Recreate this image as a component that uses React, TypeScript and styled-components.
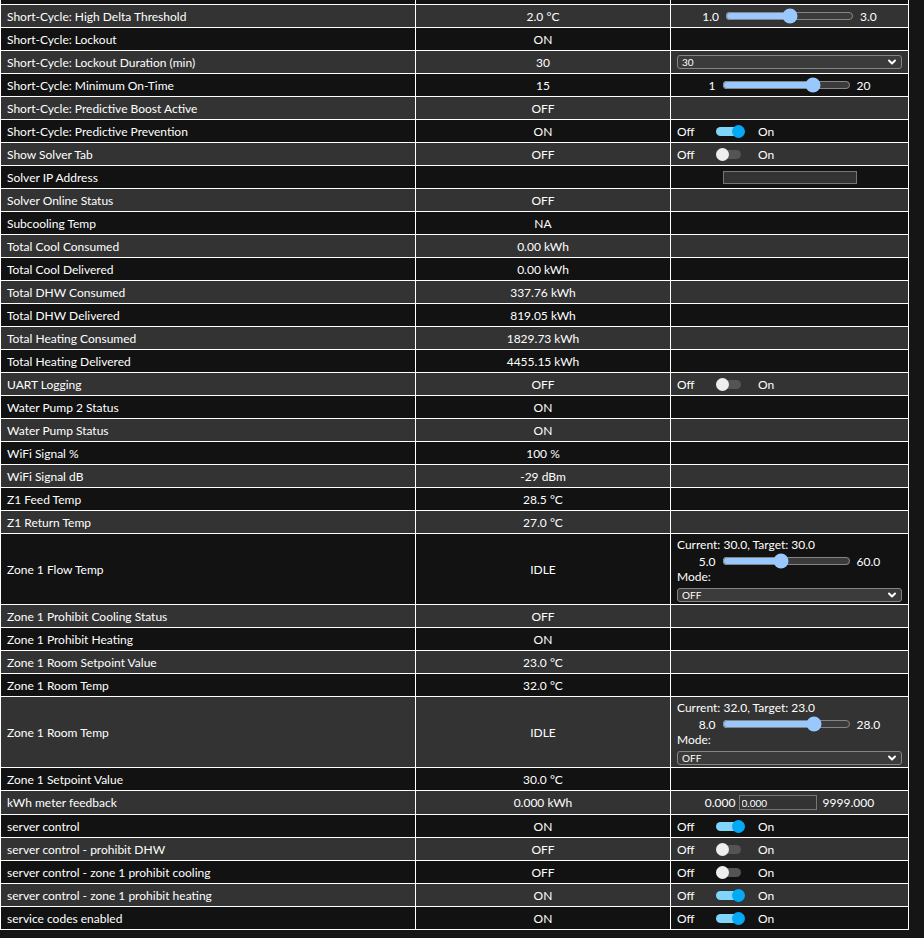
import { createGlobalStyle, styled } from "styled-components";
import { ChevronDown } from "lucide-react";

type Control =
  | { kind: "slider"; min: number; max: number; value: number; minLabel: string; maxLabel: string }
  | { kind: "select"; value: string }
  | { kind: "switch"; on: boolean }
  | { kind: "text" }
  | { kind: "number"; value: string; minLabel: string; maxLabel: string }
  | { kind: "climate"; current: string; target: string; min: number; max: number; value: number; minLabel: string; maxLabel: string; mode: string };

interface Entity {
  label: string;
  value: string;
  control?: Control;
}

const entities: Entity[] = [
  { label: "Short-Cycle: High Delta Enable", value: "ON" },
  { label: "Short-Cycle: High Delta Threshold", value: "2.0 °C", control: { kind: "slider", min: 1, max: 3, value: 2, minLabel: "1.0", maxLabel: "3.0" } },
  { label: "Short-Cycle: Lockout", value: "ON" },
  { label: "Short-Cycle: Lockout Duration (min)", value: "30", control: { kind: "select", value: "30" } },
  { label: "Short-Cycle: Minimum On-Time", value: "15", control: { kind: "slider", min: 1, max: 20, value: 15, minLabel: "1", maxLabel: "20" } },
  { label: "Short-Cycle: Predictive Boost Active", value: "OFF" },
  { label: "Short-Cycle: Predictive Prevention", value: "ON", control: { kind: "switch", on: true } },
  { label: "Show Solver Tab", value: "OFF", control: { kind: "switch", on: false } },
  { label: "Solver IP Address", value: "", control: { kind: "text" } },
  { label: "Solver Online Status", value: "OFF" },
  { label: "Subcooling Temp", value: "NA" },
  { label: "Total Cool Consumed", value: "0.00 kWh" },
  { label: "Total Cool Delivered", value: "0.00 kWh" },
  { label: "Total DHW Consumed", value: "337.76 kWh" },
  { label: "Total DHW Delivered", value: "819.05 kWh" },
  { label: "Total Heating Consumed", value: "1829.73 kWh" },
  { label: "Total Heating Delivered", value: "4455.15 kWh" },
  { label: "UART Logging", value: "OFF", control: { kind: "switch", on: false } },
  { label: "Water Pump 2 Status", value: "ON" },
  { label: "Water Pump Status", value: "ON" },
  { label: "WiFi Signal %", value: "100 %" },
  { label: "WiFi Signal dB", value: "-29 dBm" },
  { label: "Z1 Feed Temp", value: "28.5 °C" },
  { label: "Z1 Return Temp", value: "27.0 °C" },
  {
    label: "Zone 1 Flow Temp",
    value: "IDLE",
    control: { kind: "climate", current: "30.0", target: "30.0", min: 5, max: 60, value: 30, minLabel: "5.0", maxLabel: "60.0", mode: "OFF" },
  },
  { label: "Zone 1 Prohibit Cooling Status", value: "OFF" },
  { label: "Zone 1 Prohibit Heating", value: "ON" },
  { label: "Zone 1 Room Setpoint Value", value: "23.0 °C" },
  { label: "Zone 1 Room Temp", value: "32.0 °C" },
  {
    label: "Zone 1 Room Temp",
    value: "IDLE",
    control: { kind: "climate", current: "32.0", target: "23.0", min: 8, max: 28, value: 23, minLabel: "8.0", maxLabel: "28.0", mode: "OFF" },
  },
  { label: "Zone 1 Setpoint Value", value: "30.0 °C" },
  { label: "kWh meter feedback", value: "0.000 kWh", control: { kind: "number", value: "0.000", minLabel: "0.000", maxLabel: "9999.000" } },
  { label: "server control", value: "ON", control: { kind: "switch", on: true } },
  { label: "server control - prohibit DHW", value: "OFF", control: { kind: "switch", on: false } },
  { label: "server control - zone 1 prohibit cooling", value: "OFF", control: { kind: "switch", on: false } },
  { label: "server control - zone 1 prohibit heating", value: "ON", control: { kind: "switch", on: true } },
  { label: "service codes enabled", value: "ON", control: { kind: "switch", on: true } },
];

const GlobalStyle = createGlobalStyle`
  html, body {
    margin: 0;
    padding: 0;
    background: #151515;
    color-scheme: dark;
  }
  body {
    font-family: Lato, "Open Sans", sans-serif;
    font-size: 12px;
    color: #ffffff;
    overflow: hidden;
  }
`;

// the page is scrolled: the first row is mostly above the window
const Page = styled.div`
  margin-top: -19px;
`;

const Table = styled.table`
  border-collapse: collapse;
  table-layout: fixed;
  width: 908px;
`;

const Row = styled.tr<{ $shade: boolean }>`
  background: ${(p) => (p.$shade ? "#333333" : "#121212")};
`;

const Cell = styled.td<{ $center?: boolean }>`
  border: 1px solid #ffffff;
  height: 22px;
  padding: 0 6px;
  line-height: 15px;
  text-align: ${(p) => (p.$center ? "center" : "left")};
  vertical-align: middle;
  white-space: nowrap;
`;

const SliderLine = styled.div`
  display: flex;
  align-items: center;
  justify-content: center;
  gap: 4px;
  height: 16px;
`;

const Range = styled.input`
  width: 129px;
  margin: 0 2px;
  height: 14px;
`;

const SelectWrap = styled.div<{ $gap?: number }>`
  position: relative;
  margin-top: ${(p) => p.$gap ?? 0}px;
  color: #ffffff;

  svg {
    position: absolute;
    right: 4px;
    top: 1px;
    pointer-events: none;
  }
`;

const Select = styled.select`
  display: block;
  width: 100%;
  height: 14px;
  box-sizing: border-box;
  appearance: none;
  font-family: inherit;
  font-size: 10px;
  line-height: 12px;
  padding: 0 4px;
  margin: 0;
  color: #ffffff;
  background: #3b3b3b;
  border: 1px solid #858585;
  border-radius: 3px;
`;

const SwitchLine = styled.div`
  display: flex;
  align-items: center;
`;

const SwitchLabel = styled.span<{ $width?: number }>`
  display: inline-block;
  width: ${(p) => (p.$width ? `${p.$width}px` : "auto")};
`;

const Track = styled.span<{ $on: boolean }>`
  position: relative;
  display: inline-block;
  width: 25px;
  height: 9px;
  border-radius: 5px;
  margin-right: 17px;
  background: ${(p) => (p.$on ? "#81d4fa" : "#545454")};
`;

const Knob = styled.span<{ $on: boolean }>`
  position: absolute;
  top: -2px;
  left: ${(p) => (p.$on ? "16px" : "0")};
  width: 13px;
  height: 13px;
  border-radius: 50%;
  background: ${(p) => (p.$on ? "#03a9f4" : "#eeeeee")};
`;

const TextBox = styled.input<{ $width: number; $height: number }>`
  width: ${(p) => p.$width}px;
  height: ${(p) => p.$height}px;
  box-sizing: border-box;
  padding: 0 2px;
  font-family: inherit;
  font-size: 10px;
  background: #333333;
  border: 1px solid #767676;
  color: #ffffff;
  margin: 0;
`;

const Centered = styled.div<{ $height?: number }>`
  display: flex;
  align-items: center;
  justify-content: center;
  gap: 3px;
  height: ${(p) => (p.$height ? `${p.$height}px` : "auto")};
`;

const Climate = styled.div`
  display: flex;
  flex-direction: column;
  padding: 3px 0 2px;
`;

const ClimateText = styled.div`
  line-height: 16px;
`;

function Slider({ min, max, value, minLabel, maxLabel }: { min: number; max: number; value: number; minLabel: string; maxLabel: string }) {
  return (
    <SliderLine>
      <span>{minLabel}</span>
      <Range type="range" min={min} max={max} step={0.1} defaultValue={value} />
      <span>{maxLabel}</span>
    </SliderLine>
  );
}

function Dropdown({ value, gap }: { value: string; gap?: number }) {
  return (
    <SelectWrap $gap={gap}>
      <Select defaultValue={value}>
        <option>{value}</option>
      </Select>
      <ChevronDown size={12} strokeWidth={4} />
    </SelectWrap>
  );
}

function ControlView({ control }: { control?: Control }) {
  if (!control) return null;
  switch (control.kind) {
    case "slider":
      return <Slider {...control} />;
    case "select":
      return <Dropdown value={control.value} />;
    case "switch":
      return (
        <SwitchLine>
          <SwitchLabel $width={39}>Off</SwitchLabel>
          <Track $on={control.on}>
            <Knob $on={control.on} />
          </Track>
          <SwitchLabel>On</SwitchLabel>
        </SwitchLine>
      );
    case "text":
      return (
        <Centered>
          <TextBox $width={134} $height={13} type="text" />
        </Centered>
      );
    case "number":
      return (
        <Centered $height={23}>
          <span>{control.minLabel}</span>
          <TextBox $width={78} $height={15} type="text" defaultValue={control.value} />
          <span>&nbsp;{control.maxLabel}</span>
        </Centered>
      );
    case "climate":
      return (
        <Climate>
          <ClimateText>
            Current: {control.current}, Target: {control.target}
          </ClimateText>
          <Slider {...control} />
          <ClimateText>Mode:</ClimateText>
          <Dropdown value={control.mode} gap={3} />
        </Climate>
      );
  }
}

export default function App() {
  return (
    <>
      <GlobalStyle />
      <Page>
        <Table>
          <colgroup>
            <col style={{ width: 415 }} />
            <col style={{ width: 255 }} />
            <col style={{ width: 238 }} />
          </colgroup>
          <tbody>
            {entities.map((e, i) => (
              <Row key={i} $shade={i % 2 === 1}>
                <Cell>{e.label}</Cell>
                <Cell $center>{e.value}</Cell>
                <Cell>
                  <ControlView control={e.control} />
                </Cell>
              </Row>
            ))}
          </tbody>
        </Table>
      </Page>
    </>
  );
}
